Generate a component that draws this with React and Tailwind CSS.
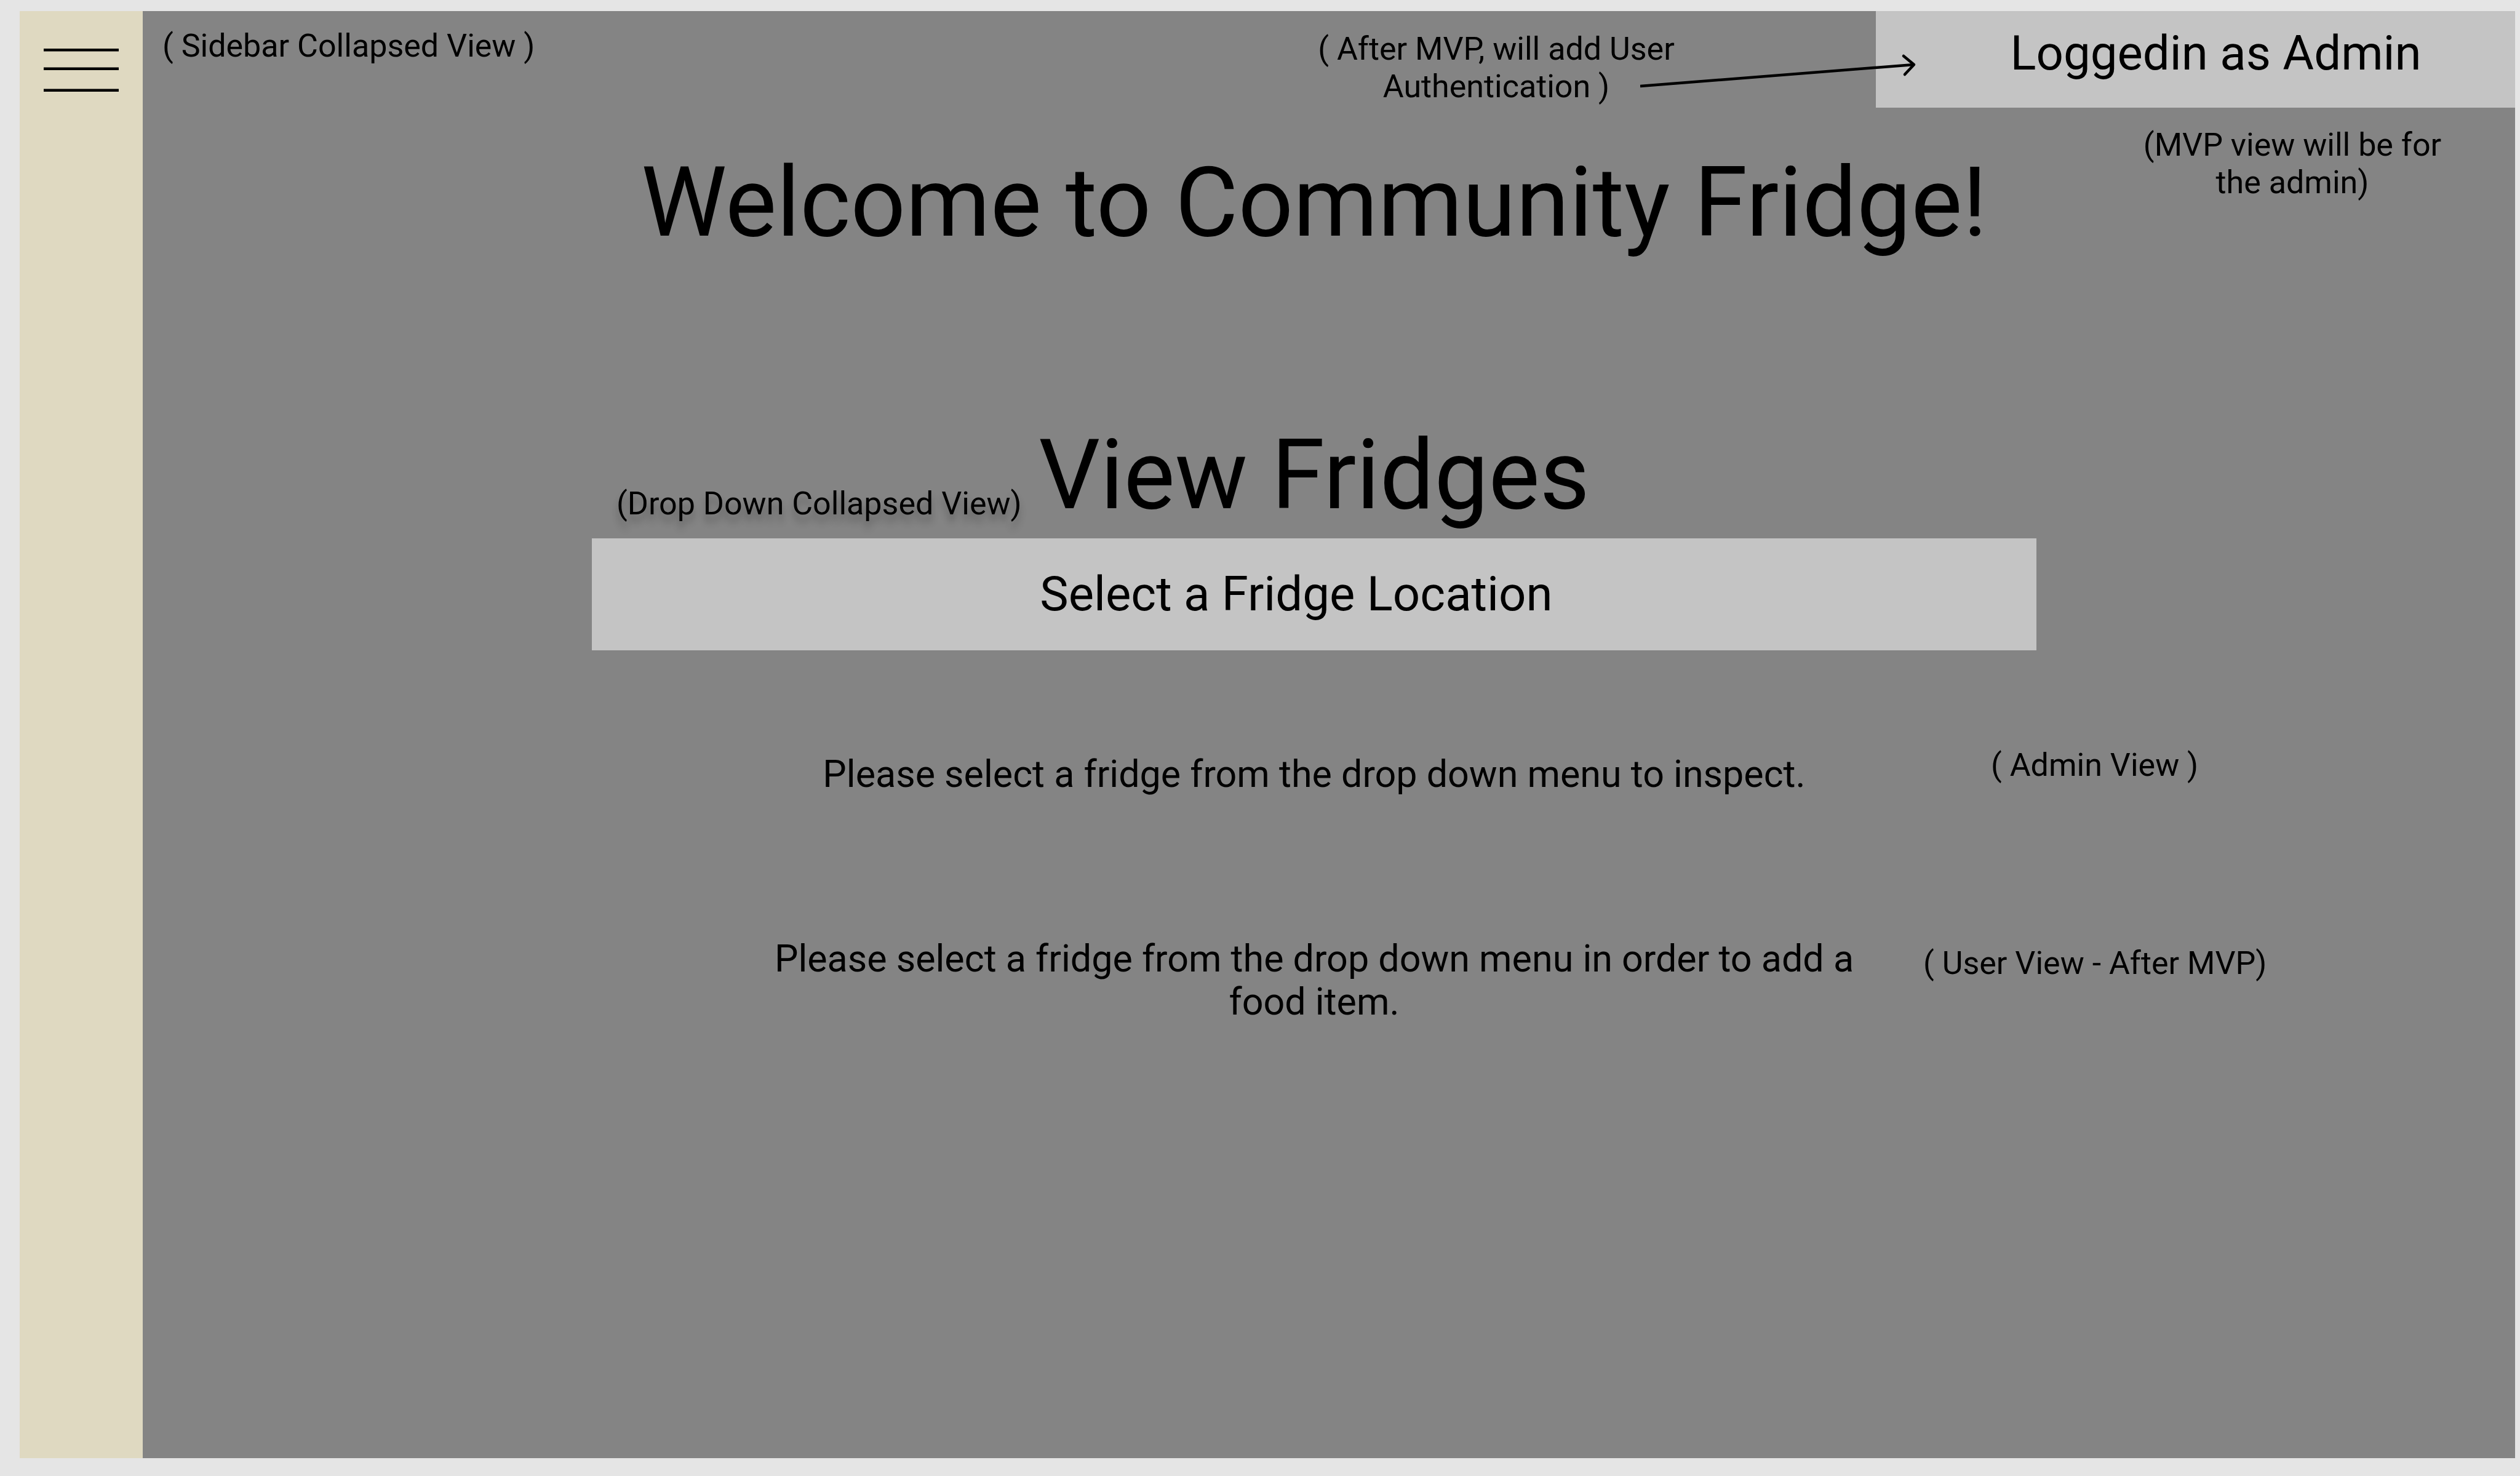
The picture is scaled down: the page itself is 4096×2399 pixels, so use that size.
function Note({ className = "", children }) {
  return <p className={`text-[52px] leading-[61px] ${className}`}>{children}</p>;
}

export default function App() {
  return (
    <div className="flex min-h-screen bg-[#e5e5e5] pt-[18px] pr-2 pb-[29px] pl-8 font-[Roboto,sans-serif] text-black">
      <aside className="w-[200px] shrink-0 bg-[#dfd9c1] pt-[60px] pl-[39px]">
        <button type="button" aria-label="Open sidebar" className="block">
          <svg width="122" height="72" viewBox="0 0 122 72" fill="black">
            <rect y="1" width="122" height="4.5" />
            <rect y="31.5" width="122" height="4.5" />
            <rect y="66.5" width="122" height="4.5" />
          </svg>
        </button>
      </aside>

      <div className="flex min-w-0 grow flex-col bg-[#848484]">
        <header className="flex h-[157px] items-start">
          <Note className="pt-[26px] pl-8">( Sidebar Collapsed View )</Note>
          <div className="relative mr-[326px] ml-auto pt-[31px]">
            <Note className="w-[582px] text-center">( After MVP, will add User Authentication )</Note>
            <svg
              className="absolute top-[68px] left-[525px]"
              width="450"
              height="60"
              viewBox="0 0 450 60"
              fill="none"
              stroke="black"
              strokeWidth="4.5"
            >
              <path d="M0 54L445 19" />
              <path d="M428 5L445 19L430 35" strokeLinecap="round" strokeLinejoin="round" />
            </svg>
          </div>
          <button type="button" className="h-full w-[1039px] bg-[#c4c4c4] pb-[20px] pl-[66px] text-[78px] leading-[92px]">
            Loggedin as Admin
          </button>
        </header>

        <main className="grid grid-cols-[minmax(0,1fr)_2348px_minmax(0,1fr)] pr-12">
          <h1 className="col-start-2 row-start-1 pt-[63px] text-center text-[157px] leading-[183px]">
            Welcome to Community Fridge!
          </h1>
          <Note className="col-start-3 row-start-1 ml-[156px] w-[520px] pt-[30px] text-center">
            (MVP view will be for the admin)
          </Note>

          <div className="relative col-start-2 pt-[260px]">
            <h2 className="text-center text-[157px] leading-[183px]">View Fridges</h2>
            <Note className="absolute bottom-[15px] left-10 [text-shadow:0_12px_12px_rgba(0,0,0,0.25)]">
              (Drop Down Collapsed View)
            </Note>
          </div>
          <button
            type="button"
            aria-haspopup="listbox"
            className="col-start-2 mt-[11px] h-[182px] bg-[#c4c4c4] pr-[58px] text-[78px] leading-[92px]"
          >
            Select a Fridge Location
          </button>

          <p className="col-start-2 mt-[166px] text-center text-[61px] leading-[70px]">
            Please select a fridge from the drop down menu to inspect.
          </p>
          <Note className="col-start-3 mt-[156px] -ml-[74px] whitespace-nowrap">( Admin View )</Note>

          <p className="col-start-2 mx-auto mt-[230px] w-[1800px] text-center text-[61px] leading-[70px]">
            Please select a fridge from the drop down menu in order to add a food item.
          </p>
          <Note className="col-start-3 mt-[242px] -ml-[184px] whitespace-nowrap">( User View - After MVP)</Note>
        </main>
      </div>
    </div>
  );
}
